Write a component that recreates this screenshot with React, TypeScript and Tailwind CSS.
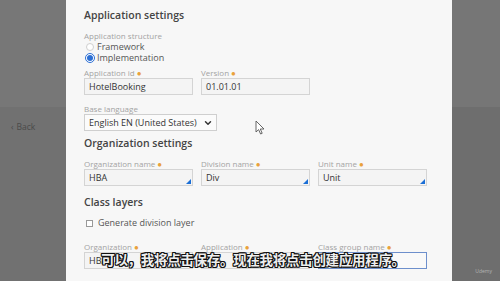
import { ChevronDown } from 'lucide-react';

const font = { fontFamily: '"Open Sans", "Noto Sans", sans-serif' };

const Label = ({ text, req }: { text: string; req?: boolean }) => (
  <div className="h-[10px] text-[8px] leading-[10px] text-[#a3a3a3] whitespace-nowrap">
    {text}
    {req && <span className="ml-[2px] text-[#e9a23b]">●</span>}
  </div>
);

const Field = ({ label, value, corner, focused }: { label: string; value: string; corner?: boolean; focused?: boolean }) => (
  <div className="flex w-[109px] flex-col">
    <Label text={label} req />
    <div
      className={`relative flex h-[17px] items-center border pl-[4px] text-[9px] text-[#333] ${
        focused ? 'border-[#6d8fcc] bg-[#f9f9f9]' : 'border-[#d4d4d4] bg-[#f4f4f4]'
      }`}
    >
      {value}
      {corner && (
        <div className="absolute bottom-[1px] right-[1px] h-0 w-0 border-b-[5px] border-l-[5px] border-b-[#1b6fd6] border-l-transparent" />
      )}
    </div>
  </div>
);

const Heading = ({ text, className }: { text: string; className: string }) => (
  <div className={`h-[14px] text-[10.5px] font-semibold leading-[14px] text-[#444] ${className}`}>{text}</div>
);

export default function App() {
  return (
    <div className="relative flex h-[281px] w-[500px] overflow-hidden" style={font}>
      {/* left gray side */}
      <div className="flex w-[66px] flex-col">
        <div className="h-[107px] bg-[#777777]" />
        <div className="flex flex-1 flex-col bg-[#717171] pl-[11px] pt-[15px]">
          <div className="text-[8.5px] leading-[10px] text-[#4a4a4a]">
            <span className="mr-[3px]">‹</span>Back
          </div>
        </div>
      </div>

      {/* settings panel */}
      <div className="flex w-[386px] flex-col bg-[#f7f7f7] pl-[18px] pt-[8px]">
        <Heading text="Application settings" className="" />
        <div className="mt-[9px]">
          <Label text="Application structure" />
        </div>
        <div className="flex h-[11px] items-center text-[9px] text-[#555]">
          <div className="ml-[2px] mr-[3px] h-[8px] w-[8px] rounded-full border border-[#cfcfcf] bg-white" />
          Framework
        </div>
        <div className="flex h-[11px] items-center text-[9px] text-[#555]">
          <div className="ml-[1px] mr-[2px] flex h-[10px] w-[10px] items-center justify-center rounded-full border border-[#2c6fd4] bg-white">
            <div className="h-[6px] w-[6px] rounded-full bg-[#2c6fd4]" />
          </div>
          Implementation
        </div>

        <div className="mt-[5px] flex gap-[8px]">
          <Field label="Application id" value="HotelBooking" />
          <Field label="Version" value="01.01.01" />
        </div>

        <div className="mt-[9px]">
          <Label text="Base language" />
        </div>
        <div className="flex h-[17px] w-[133px] items-center justify-between border border-[#cfcfcf] bg-[#fbfbfb] pl-[4px] pr-[3px] text-[9px] text-[#333]">
          English EN (United States)
          <ChevronDown size={10} strokeWidth={3.5} className="text-[#333]" />
        </div>

        <Heading text="Organization settings" className="mt-[5px]" />
        <div className="mt-[9px] flex gap-[8px]">
          <Field label="Organization name" value="HBA" corner />
          <Field label="Division name" value="Div" corner />
          <Field label="Unit name" value="Unit" corner />
        </div>

        <Heading text="Class layers" className="mt-[9px]" />
        <div className="mt-[8px] flex h-[12px] items-center text-[9px] text-[#555]">
          <div className="ml-[2px] mr-[5px] h-[7px] w-[7px] border border-[#999] bg-white" />
          Generate division layer
        </div>

        <div className="mt-[13px] flex gap-[8px]">
          <Field label="Organization" value="HBA" />
          <Field label="Application" value="" />
          <Field label="Class group name" value="" focused />
        </div>
      </div>

      {/* right gray side */}
      <div className="relative flex flex-1 flex-col">
        <div className="h-[107px] bg-[#767676]" />
        <div className="flex-1 bg-[#6e6e6e]" />
        <div className="absolute bottom-[6px] right-[8px] text-[5px] text-[#b5b5b5]">Udemy</div>
      </div>

      {/* mouse cursor */}
      <svg className="absolute left-[255px] top-[120px]" width="11" height="15" viewBox="0 0 11 15">
        <path d="M1 1 L1 12 L3.6 9.6 L5.6 14 L7.2 13.3 L5.3 9 L9 9 Z" fill="#fff" stroke="#555" strokeWidth="0.9" strokeLinejoin="round" />
      </svg>

      {/* subtitle */}
      <div
        className="absolute left-0 top-[251px] w-[500px] pl-[6px] text-center text-[13.5px] font-bold leading-[16px] tracking-[-0.3px] text-[#eeeeee] [text-shadow:-1px_-1px_0_#111,1px_-1px_0_#111,-1px_1px_0_#111,1px_1px_0_#111,0_1px_0_#111,0_-1px_0_#111,1px_0_0_#111,-1px_0_0_#111]"
        style={{ fontFamily: '"Noto Sans CJK SC", sans-serif' }}
      >
        可以，我将点击保存。现在我将点击创建应用程序。
      </div>
    </div>
  );
}
